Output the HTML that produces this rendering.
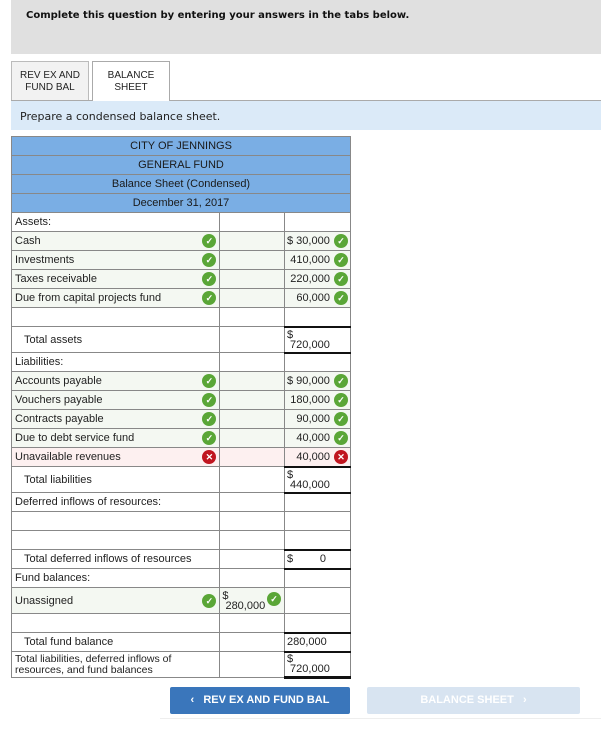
<!DOCTYPE html>
<html><head><style>
body{margin:0;width:601px;height:735px;background:#fff;font-family:"Liberation Sans",Arial,sans-serif;position:relative;overflow:hidden}
.top{position:absolute;left:11px;top:0;width:590px;height:54px;background:#e0e0e0}
.top b{position:absolute;left:15px;top:10px;font-family:"DejaVu Sans",Verdana,sans-serif;font-size:10px;color:#111}
.tab{position:absolute;top:61px;height:39px;font-size:10px;text-align:center;line-height:12px;box-sizing:border-box;padding-top:8px;color:#222}
.t1{left:11px;width:78px;background:#f2f2f2;border:1px solid #bbb;border-bottom:none}
.t2{left:92px;width:78px;background:#fff;border:1px solid #aaa;border-bottom:none;height:40px}
.line{position:absolute;left:11px;top:100px;width:590px;height:1px;background:#aaa}
.instr{position:absolute;left:11px;top:101px;width:590px;height:29px;background:#dbeaf8;font-family:"DejaVu Sans",Verdana,sans-serif;font-size:11px;color:#222;line-height:31px;text-indent:9px}
table{position:absolute;left:11px;top:136px;border-collapse:collapse;width:340px;font-size:11px;color:#222}
td{border:1px solid #888;padding:0 3px;height:19px;box-sizing:border-box;position:relative;white-space:nowrap}
.h td{background:#7aaee4;text-align:center;font-size:11px;color:#1a1a1a}
.c1{width:209px}.c2{width:65px}.c3{width:66px}
.g{background:#f4f8f2}
.r{background:#fdf0f0}
.ok,.no{position:absolute;width:14px;height:14px;border-radius:50%;top:2px;color:#fff;font-size:9px;line-height:14px;text-align:center;font-weight:bold}
.ok{background:#5aa637}.no{background:#c0151f}
.c1 .ok,.c1 .no{right:3px}
.v{text-align:right;padding-right:20px}
.v .ok,.v .no{right:2px}
.tot{border-top:2px solid #111}
.ind{padding-left:12px}
.btn{position:absolute;top:687px;height:27px;font-size:11px;font-weight:bold;color:#fff;line-height:27px;text-align:center;border-radius:2px}
</style></head><body>
<div class="top"><b>Complete this question by entering your answers in the tabs below.</b></div>
<div class="tab t1">REV EX AND<br>FUND BAL</div>
<div class="line"></div>
<div class="tab t2">BALANCE<br>SHEET</div>
<div class="instr">Prepare a condensed balance sheet.</div>
<table>
<tr class="h"><td colspan="3">CITY OF JENNINGS</td></tr>
<tr class="h"><td colspan="3">GENERAL FUND</td></tr>
<tr class="h"><td colspan="3">Balance Sheet (Condensed)</td></tr>
<tr class="h"><td colspan="3">December 31, 2017</td></tr>
<tr><td class="c1">Assets:</td><td class="c2"></td><td class="c3"></td></tr>
<tr><td class="c1 g">Cash<span class="ok">✓</span></td><td class="g"></td><td class="v g" style="text-align:left;padding-left:2px">$ 30,000<span class="ok">✓</span></td></tr>
<tr><td class="c1 g">Investments<span class="ok">✓</span></td><td class="g"></td><td class="v g">410,000<span class="ok">✓</span></td></tr>
<tr><td class="c1 g">Taxes receivable<span class="ok">✓</span></td><td class="g"></td><td class="v g">220,000<span class="ok">✓</span></td></tr>
<tr><td class="c1 g">Due from capital projects fund<span class="ok">✓</span></td><td class="g"></td><td class="v g">60,000<span class="ok">✓</span></td></tr>
<tr><td></td><td></td><td></td></tr>
<tr><td class="ind" style="height:26px">Total assets</td><td></td><td class="tot" style="line-height:10px;padding-left:2px">$<br>&nbsp;720,000</td></tr>
<tr><td>Liabilities:</td><td></td><td class="tot"></td></tr>
<tr><td class="c1 g">Accounts payable<span class="ok">✓</span></td><td class="g"></td><td class="v g" style="text-align:left;padding-left:2px">$ 90,000<span class="ok">✓</span></td></tr>
<tr><td class="c1 g">Vouchers payable<span class="ok">✓</span></td><td class="g"></td><td class="v g">180,000<span class="ok">✓</span></td></tr>
<tr><td class="c1 g">Contracts payable<span class="ok">✓</span></td><td class="g"></td><td class="v g">90,000<span class="ok">✓</span></td></tr>
<tr><td class="c1 g">Due to debt service fund<span class="ok">✓</span></td><td class="g"></td><td class="v g">40,000<span class="ok">✓</span></td></tr>
<tr><td class="c1 r">Unavailable revenues<span class="no">✕</span></td><td class="r"></td><td class="v r">40,000<span class="no">✕</span></td></tr>
<tr><td class="ind" style="height:26px">Total liabilities</td><td></td><td class="tot" style="line-height:10px;padding-left:2px">$<br>&nbsp;440,000</td></tr>
<tr><td>Deferred inflows of resources:</td><td></td><td class="tot"></td></tr>
<tr><td></td><td></td><td></td></tr>
<tr><td></td><td></td><td></td></tr>
<tr><td class="ind">Total deferred inflows of resources</td><td></td><td class="tot" style="padding-left:2px">$<span style="position:absolute;right:24px">0</span></td></tr>
<tr><td>Fund balances:</td><td></td><td class="tot"></td></tr>
<tr><td class="c1 g" style="height:26px">Unassigned<span class="ok" style="top:6px">✓</span></td><td class="g" style="line-height:10px;padding-left:2px">$<br>&nbsp;280,000<span class="ok" style="right:3px;top:4px">✓</span></td><td></td></tr>
<tr><td></td><td></td><td></td></tr>
<tr><td class="ind">Total fund balance</td><td></td><td class="tot" style="padding-left:2px">280,000</td></tr>
<tr><td style="height:26px;line-height:11px;font-size:10.5px">Total liabilities, deferred inflows of<br>resources, and fund balances</td><td></td><td class="tot" style="line-height:10px;padding-left:2px;border-bottom:3px solid #111">$<br>&nbsp;720,000</td></tr>
</table>
<div class="btn" style="left:170px;width:180px;background:#3a76bb">‹&nbsp;&nbsp; REV EX AND FUND BAL</div>
<div class="btn" style="left:367px;width:213px;background:#d8e4f1">BALANCE SHEET &nbsp;&nbsp;›</div>
<div style="position:absolute;left:160px;top:718px;width:441px;height:1px;background:#eee"></div>
</body></html>
